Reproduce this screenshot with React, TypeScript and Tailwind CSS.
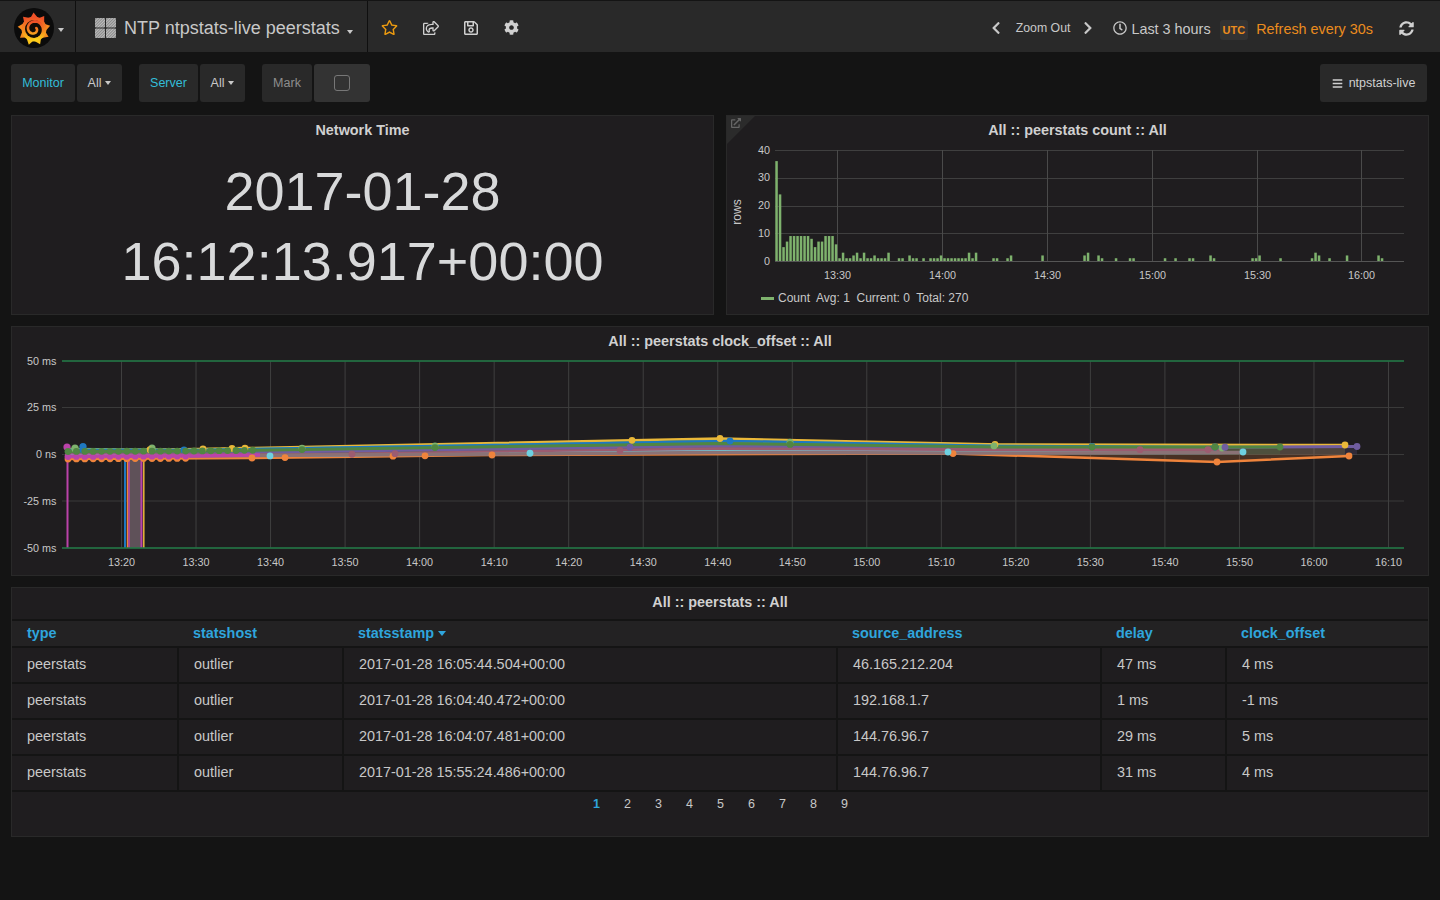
import { FaBars, FaChevronLeft, FaChevronRight, FaCog, FaExternalLinkAlt, FaRegClock, FaRegSave, FaRegShareSquare, FaRegStar, FaSyncAlt } from 'react-icons/fa';

const font = { fontFamily: '"Liberation Sans", Arial, sans-serif' };

// [minute index, rows]
const countBars: [number, number][] = [
  [0, 36], [1, 24], [2, 5], [3, 7], [4, 9], [5, 9], [6, 9], [7, 9], [8, 9], [9, 9], [10, 8], [11, 5], [12, 7], [13, 7], [14, 9], [15, 9], [16, 9], [17, 6],
  [18, 1], [19, 3], [20, 1], [21, 1], [22, 2], [23, 3], [24, 1], [25, 3], [26, 1], [27, 1], [28, 2], [29, 1], [30, 1], [31, 1], [32, 3],
  [35, 1], [36, 1], [38, 2], [39, 1], [40, 1], [42, 1], [44, 1], [45, 1], [46, 1], [47, 2], [48, 1], [49, 1], [50, 1], [51, 1], [52, 1], [53, 1], [54, 1], [55, 3], [56, 1], [57, 3],
  [62, 1], [63, 1], [66, 1], [67, 2], [76, 2], [88, 2], [89, 3], [92, 2], [93, 1], [97, 1], [101, 1], [102, 1], [111, 1], [114, 1], [118, 1], [119, 1],
  [124, 2], [125, 1], [136, 1], [137, 1], [138, 2], [144, 1], [153, 1], [154, 3], [155, 2], [158, 1], [163, 2], [172, 2], [173, 1],
];

const countTicks = [
  { x: 837.5, label: '13:30' },
  { x: 942.5, label: '14:00' },
  { x: 1047.5, label: '14:30' },
  { x: 1152.5, label: '15:00' },
  { x: 1257.5, label: '15:30' },
  { x: 1361.5, label: '16:00' },
];

const offsetTicks = ['13:20', '13:30', '13:40', '13:50', '14:00', '14:10', '14:20', '14:30', '14:40', '14:50', '15:00', '15:10', '15:20', '15:30', '15:40', '15:50', '16:00', '16:10'];

const denseX = Array.from({ length: 15 }, (_, i) => 68 + i * 8.4);
const greenX = Array.from({ length: 23 }, (_, i) => 68 + i * 8.4);

type Series = { color: string; width: number; pts: [number, number][]; dots: number[] };

const orange: Series = { color: '#EF843C', width: 2.5, pts: [[66, 459], [250, 458], [490, 455], [950, 453.5], [1217, 462], [1349, 456]], dots: [...denseX, 252, 285, 393, 425, 492, 953, 1217, 1349] };
const magenta: Series = { color: '#BA43A9', width: 3.5, pts: [[66, 456.5], [190, 456], [260, 455]], dots: denseX };

const series: Series[] = [
  orange,
  { color: '#EAB839', width: 2.5, pts: [[66, 451], [200, 449], [720, 438.5], [1000, 444.5], [1345, 445]], dots: [150, 203, 232, 245, 632, 720, 995, 1345] },
  { color: '#7EB26D', width: 2.5, pts: [[66, 449], [200, 450], [720, 441], [1000, 446], [1222, 448]], dots: [75, 152, 302, 435, 790, 994, 1222] },
  { color: '#1F78C1', width: 2.5, pts: [[66, 450], [200, 450], [730, 441], [1000, 446], [1215, 447]], dots: [83, 184, 730, 1092, 1215] },
  { color: '#705DA0', width: 3, pts: [[66, 453], [200, 453], [720, 446], [1000, 448.5], [1357, 446.5]], dots: [630, 1225, 1357] },
  { color: '#9c5c70', width: 3.5, pts: [[66, 455], [300, 455], [720, 449], [1000, 450], [1225, 449.5]], dots: [352, 395, 620, 1140, 1208] },
  { color: '#6ED0E0', width: 2, pts: [[66, 455.5], [300, 456], [720, 451], [950, 452], [1243, 452]], dots: [270, 530, 948, 1243] },
  { color: '#8a7276', width: 3.5, pts: [[190, 456], [720, 452.5], [950, 453], [1243, 452.5]], dots: [] },
  magenta,
  { color: '#508642', width: 3, pts: [[66, 451.5], [200, 451], [720, 443.5], [1000, 447], [1280, 447]], dots: [...greenX, 302, 435, 790, 1092, 1215, 1280] },
];

// a few points that stand above the band at the far left
const blobs: [number, number, string][] = [
  [67, 447, '#BA43A9'],
  [75, 448, '#7EB26D'],
  [83, 446.5, '#1F78C1'],
  [152, 448, '#7EB26D'],
];

const yAt = (pts: [number, number][], x: number) => {
  for (let i = 1; i < pts.length; i++) {
    if (x <= pts[i][0]) {
      const [x0, y0] = pts[i - 1];
      const [x1, y1] = pts[i];
      return y0 + ((y1 - y0) * (x - x0)) / (x1 - x0);
    }
  }
  return pts[pts.length - 1][1];
};

const rows = [
  ['peerstats', 'outlier', '2017-01-28 16:05:44.504+00:00', '46.165.212.204', '47 ms', '4 ms'],
  ['peerstats', 'outlier', '2017-01-28 16:04:40.472+00:00', '192.168.1.7', '1 ms', '-1 ms'],
  ['peerstats', 'outlier', '2017-01-28 16:04:07.481+00:00', '144.76.96.7', '29 ms', '5 ms'],
  ['peerstats', 'outlier', '2017-01-28 15:55:24.486+00:00', '144.76.96.7', '31 ms', '4 ms'],
];

const columns = ['type', 'statshost', 'statsstamp', 'source_address', 'delay', 'clock_offset'];

function GrafanaLogo() {
  const teeth = Array.from({ length: 9 }, (_, i) => i * 40);
  // spiral from the centre out to the gear's top right
  const spiral = Array.from({ length: 40 }, (_, i) => {
    const t = i / 39;
    const a = -0.4 + t * Math.PI * 2.6;
    const r = 2.5 + t * 8;
    return `${20 + r * Math.cos(a)},${21 + r * Math.sin(a)}`;
  }).join(' ');
  return (
    <svg width="40" height="40" viewBox="0 0 40 40">
      <defs>
        <linearGradient id="gf" x1="0" y1="0" x2="0" y2="1" gradientUnits="objectBoundingBox">
          <stop offset="0" stopColor="#ee4f28" />
          <stop offset="0.55" stopColor="#f58a1f" />
          <stop offset="1" stopColor="#fcd21a" />
        </linearGradient>
      </defs>
      <circle cx="20" cy="20" r="20" fill="#0b0b0b" />
      {teeth.map((a, i) => (
        <path key={a} d="M16.5 10 L19.5 4.5 L24 10 Z" fill={i === 0 || i === 1 || i === 8 ? '#ee5228' : i === 4 || i === 5 ? '#fcc41a' : '#f58a1f'} transform={`rotate(${a} 20 21)`} />
      ))}
      <circle cx="20" cy="21" r="12.5" fill="url(#gf)" />
      <circle cx="20" cy="21" r="9" fill="#120c06" />
      <polyline points={spiral} fill="none" stroke="url(#gf)" strokeWidth="2.6" strokeLinecap="round" />
    </svg>
  );
}

function DashIcon() {
  return (
    <svg width="21" height="20" viewBox="0 0 21 20">
      <defs>
        <pattern id="hatch" width="2" height="2" patternUnits="userSpaceOnUse" patternTransform="rotate(45)">
          <rect width="2" height="2" fill="#8a8a8a" />
          <rect width="1" height="2" fill="#bdbdbd" />
        </pattern>
      </defs>
      <rect x="0" y="0" width="10" height="9.5" rx="1" fill="url(#hatch)" />
      <rect x="11" y="0" width="10" height="9.5" rx="1" fill="url(#hatch)" />
      <rect x="0" y="10.5" width="10" height="9.5" rx="1" fill="url(#hatch)" />
      <rect x="11" y="10.5" width="10" height="9.5" rx="1" fill="url(#hatch)" />
    </svg>
  );
}

function Caret() {
  return <span className="inline-block border-x-[3.5px] border-t-[4px] border-x-transparent border-t-current" />;
}

function Navbar() {
  return (
    <div className="flex h-[52px] items-stretch border-t border-[#141414] bg-[#292929] text-[#c8c8c8]">
      <div className="flex w-[76px] items-center border-r border-[#0f0f0f] pl-[14px] pt-[2px]">
        <GrafanaLogo />
        <span className="ml-[4px] -mt-[2px] text-[#c8c8c8]"><Caret /></span>
      </div>
      <div className="flex w-[292px] items-center border-r border-[#0f0f0f] pl-[19px] pt-[3px]">
        <DashIcon />
        <span className="ml-[8px] text-[18px] text-[#c8c8c8]">NTP ntpstats-live peerstats</span>
        <span className="ml-[7px] mt-[2px]"><Caret /></span>
      </div>
      <div className="flex items-center gap-[24.5px] pl-[13px] pt-[2px] text-[15px] text-[#d0d0d0]">
        <FaRegStar className="text-[#eb9a10] text-[17px]" />
        <FaRegShareSquare className="text-[16px]" />
        <FaRegSave className="text-[16px]" />
        <FaCog className="text-[15px]" />
      </div>
      <div className="ml-auto flex items-center pr-[26px] pt-[3px]">
        <FaChevronLeft className="mr-[13px] text-[14px]" />
        <span className="text-[12.3px]">Zoom Out</span>
        <FaChevronRight className="ml-[11px] text-[14px]" />
        <FaRegClock className="ml-[18px] text-[14px]" />
        <span className="ml-[4px] mt-[4px] text-[14.4px]">Last 3 hours</span>
        <span className="ml-[9px] mt-[4px] rounded-[3px] bg-[#333333] px-[3px] py-[3px] text-[11px] font-bold leading-[14px] text-[#eb8c1e]">UTC</span>
        <span className="ml-[8px] mt-[4px] text-[14.4px] text-[#eb8c1e]">Refresh every 30s</span>
        <FaSyncAlt className="ml-[26px] text-[15px] text-[#d0d0d0]" />
      </div>
    </div>
  );
}

function SubItem({ children, className }: { children: React.ReactNode; className: string }) {
  return <div className={`flex h-[38px] items-center justify-center rounded-[3px] bg-[#292929] text-[12.5px] ${className}`}>{children}</div>;
}

function Submenu() {
  return (
    <div className="flex h-[63px] items-start pl-[11px] pr-[13px] pt-[12px]">
      <SubItem className="w-[64px] text-[#33bdd8]">Monitor</SubItem>
      <SubItem className="ml-[2px] w-[45px] gap-[4px] text-[#c8c8c8]">All <Caret /></SubItem>
      <SubItem className="ml-[17px] w-[59px] text-[#33bdd8]">Server</SubItem>
      <SubItem className="ml-[2px] w-[45px] gap-[4px] text-[#c8c8c8]">All <Caret /></SubItem>
      <SubItem className="ml-[17px] w-[50px] text-[#8e8e8e]">Mark</SubItem>
      <SubItem className="ml-[2px] w-[56px] bg-[#333333]">
        <span className="block h-[16px] w-[16px] rounded-[3px] border border-[#777777]" />
      </SubItem>
      <SubItem className="ml-auto w-[107px] gap-[6px] text-[#d0d0d0]">
        <FaBars className="text-[11px]" /> ntpstats-live
      </SubItem>
    </div>
  );
}

function PanelTitle({ children }: { children: React.ReactNode }) {
  return <div className="flex h-[28px] items-center justify-center pt-[2px] text-[14.4px] font-bold text-[#d0d0d0]">{children}</div>;
}

function CountChart() {
  const y = (v: number) => 261 - v * 2.775;
  return (
    <svg className="block" width="701" height="141" viewBox="727 144 701 141" style={font}>
      {[40, 30, 20, 10, 0].map((v) => (
        <g key={v}>
          <line x1="775" x2="1404" y1={Math.round(y(v)) + 0.5} y2={Math.round(y(v)) + 0.5} stroke={v === 0 ? '#555555' : '#3f3f3f'} />
          <text x="770" y={y(v) + 3.5} textAnchor="end" fontSize="10.8" fill="#c8c8c8">{v}</text>
        </g>
      ))}
      {countTicks.map((t) => (
        <g key={t.label}>
          <line x1={t.x} x2={t.x} y1="150" y2="261" stroke="#4a4a4a" />
          <text x={t.x} y="279" textAnchor="middle" fontSize="10.8" fill="#c8c8c8">{t.label}</text>
        </g>
      ))}
      {countBars.map(([i, v]) => (
        <rect key={i} x={775.3 + i * 3.5} y={y(v)} width="2.5" height={v * 2.775} fill="#7EB26D" />
      ))}
      <text x="741" y="212" transform="rotate(-90 741 212)" textAnchor="middle" fontSize="12" fill="#c8c8c8">rows</text>
    </svg>
  );
}

function OffsetChart() {
  const ys = [
    { y: 361, label: '50 ms' },
    { y: 407.5, label: '25 ms' },
    { y: 454.5, label: '0 ns' },
    { y: 501, label: '-25 ms' },
    { y: 548, label: '-50 ms' },
  ];
  return (
    <svg className="block" width="1416" height="220" viewBox="12 355 1416 220" style={font}>
      {ys.map((t) => (
        <g key={t.y}>
          <line x1="62" x2="1404" y1={t.y} y2={t.y} stroke="#3a3a3a" />
          <text x="56.5" y={t.y + 3.5} textAnchor="end" fontSize="10.8" fill="#c8c8c8">{t.label}</text>
        </g>
      ))}
      {offsetTicks.map((label, i) => {
        const x = 121.5 + i * 74.53;
        return (
          <g key={label}>
            <line x1={x} x2={x} y1="361" y2="548" stroke="#3f3f3f" />
            <text x={x} y="566" textAnchor="middle" fontSize="10.8" fill="#c8c8c8">{label}</text>
          </g>
        );
      })}
      <line x1="62" x2="1404" y1="361" y2="361" stroke="#1f7a45" strokeWidth="1.5" />

      {series.map((s) => {
        const line = s.pts.map(([x, y]) => `${x},${y}`).join(' ');
        const first = s.pts[0][0];
        const last = s.pts[s.pts.length - 1][0];
        return <polygon key={s.color} points={`${first},454.5 ${line} ${last},454.5`} fill={s.color} fillOpacity="0.2" />;
      })}

      {/* the big drop just after 13:20 */}
      <rect x="128" y="456" width="14" height="92" fill="#5f5159" />
      <line x1="125" x2="125" y1="456" y2="548" stroke="#1F78C1" strokeWidth="2" />
      <line x1="127.5" x2="127.5" y1="456" y2="548" stroke="#EF843C" strokeWidth="1.5" />
      <line x1="129" x2="129" y1="456" y2="548" stroke="#BA43A9" strokeWidth="1.5" />
      <line x1="141.5" x2="141.5" y1="456" y2="548" stroke="#BA43A9" strokeWidth="2" />
      <line x1="143.8" x2="143.8" y1="456" y2="548" stroke="#EAB839" strokeWidth="1.5" />
      <line x1="67.5" x2="67.5" y1="456" y2="548" stroke="#BA43A9" strokeWidth="2" />

      {series.map((s) => (
        <polyline key={s.color} points={s.pts.map(([x, y]) => `${x},${y}`).join(' ')} fill="none" stroke={s.color} strokeWidth={s.width} />
      ))}
      {blobs.map(([x, y, c]) => (
        <circle key={`${x}${c}`} cx={x} cy={y} r="3.6" fill={c} />
      ))}
      {series.map((s) =>
        s.dots.map((x) => <circle key={`${s.color}${x}`} cx={x} cy={yAt(s.pts, x)} r="3.4" fill={s.color} />),
      )}
      <line x1="62" x2="1404" y1="548" y2="548" stroke="#1f7a45" strokeWidth="1.5" />
    </svg>
  );
}

const grid = 'grid grid-cols-[165px_165px_494px_264px_125px_203px]';

function PeerTable() {
  return (
    <div className="h-[250px] border border-[#292929] bg-[#1f1d1f]">
      <div className="flex h-[31px] items-center justify-center pb-[2px] text-[14.4px] font-bold text-[#d0d0d0]">All :: peerstats :: All</div>
      <div className={`${grid} h-[29px] items-center border-y-2 border-[#141414] bg-[#232223] text-[14.4px] font-bold text-[#2fa5dc]`}>
        {columns.map((c, i) => (
          <div key={c} className={i > 0 ? 'pl-[16px]' : 'pl-[15px]'}>
            {c}
            {c === 'statsstamp' && <span className="ml-[4px] inline-block border-x-[4.5px] border-t-[5px] border-x-transparent border-t-current align-middle" />}
          </div>
        ))}
      </div>
      {rows.map((row, r) => (
        <div key={r} className={`${grid} h-[36px] border-b-2 border-[#141414] text-[14.4px] text-[#c8c8c8]`}>
          {row.map((cell, i) => (
            <div key={i} className={`flex items-center ${i > 0 ? 'border-l-2 border-[#141414] pl-[15px]' : 'pl-[15px]'}`}>{cell}</div>
          ))}
        </div>
      ))}
      <div className="flex justify-center pl-[1px] pt-[3px] text-[12.5px] text-[#c8c8c8]">
        {[1, 2, 3, 4, 5, 6, 7, 8, 9].map((n) => (
          <span key={n} className={`w-[31px] text-center ${n === 1 ? 'font-bold text-[#2fa5dc]' : ''}`}>{n}</span>
        ))}
      </div>
    </div>
  );
}

export default function App() {
  return (
    <div className="min-h-[900px] bg-[#141414]" style={font}>
      <Navbar />
      <Submenu />
      <div className="flex flex-col gap-[11px] px-[11px]">
        <div className="flex gap-[12px]">
          <div className="h-[200px] w-[703px] border border-[#292929] bg-[#1f1d1f]">
            <PanelTitle>Network Time</PanelTitle>
            <div className="pt-[12px] text-center text-[54px] leading-[70px] text-[#d8d9da]">
              <div>2017-01-28</div>
              <div>16:12:13.917+00:00</div>
            </div>
          </div>
          <div className="relative h-[200px] w-[703px] border border-[#292929] bg-[#1f1d1f]">
            <div className="absolute left-0 top-0 h-0 w-0 border-r-[28px] border-t-[28px] border-r-transparent border-t-[#2b2b2b]" />
            <FaExternalLinkAlt className="absolute left-[4px] top-[2px] text-[10px] text-[#666666]" />
            <PanelTitle>All :: peerstats count :: All</PanelTitle>
            <CountChart />
            <div className="flex items-center pl-[34px] pt-[4px] text-[12px] text-[#c8c8c8]">
              <span className="mr-[4px] h-[3px] w-[13px] bg-[#7EB26D]" />
              <span>Count&nbsp; Avg: 1&nbsp; Current: 0&nbsp; Total: 270</span>
            </div>
          </div>
        </div>
        <div className="h-[250px] border border-[#292929] bg-[#1f1d1f]">
          <PanelTitle>All :: peerstats clock_offset :: All</PanelTitle>
          <OffsetChart />
        </div>
        <PeerTable />
      </div>
    </div>
  );
}
